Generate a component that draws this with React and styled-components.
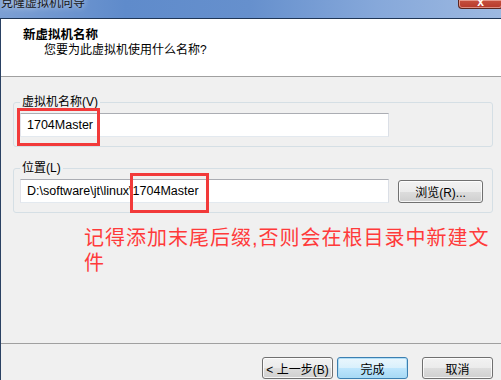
import React from 'react';
import styled, { createGlobalStyle } from 'styled-components';

const UI_FONT = '"Liberation Sans", "Noto Sans CJK SC", sans-serif';

const GlobalStyle = createGlobalStyle`
  html, body {
    margin: 0;
    padding: 0;
    background: #f0f0f0;
  }
  body {
    font-family: ${UI_FONT};
    font-size: 12px;
    color: #000;
  }
`;

const Window = styled.div`
  position: relative;
  width: 501px;
  height: 380px;
  display: flex;
  flex-direction: column;
  overflow: hidden;
  background: #f0f0f0;
`;

const TitleBar = styled.div`
  height: 18px;
  flex: none;
  display: flex;
  align-items: flex-start;
  overflow: hidden;
  background: linear-gradient(
    to right,
    #7c9fd3 0%,
    #5f8bcb 25%,
    #6690cd 50%,
    #86a8da 75%,
    #9db9e1 100%
  );
  border-bottom: 1px solid #1f3656;
`;

const TitleText = styled.span`
  margin: -5px 0 0 1px;
  font-size: 12px;
  line-height: 16px;
  color: #151515;
  text-shadow: 0 0 6px rgba(255, 255, 255, 0.8);
`;

const CloseButton = styled.div`
  margin-left: auto;
  margin-right: -2px;
  width: 43px;
  height: 8px;
  border: 1px solid #5a2620;
  border-top: none;
  border-radius: 0 0 4px 4px;
  box-shadow: inset 0 0 0 1px rgba(255, 210, 200, 0.55);
  background: linear-gradient(to bottom, #c7513f, #b5392a);
  color: #fff;
  font-size: 12px;
  line-height: 4px;
  text-align: center;
  font-weight: bold;
`;

const Frame = styled.div`
  flex: 1;
  display: flex;
  flex-direction: column;
  border-left: 1px solid #2a4163;
`;

const Header = styled.div`
  flex: none;
  height: 58px;
  box-sizing: border-box;
  padding: 9px 0 0 22px;
  background: #fff;
  border-bottom: 1px solid #a0a0a0;
`;

const HeaderTitle = styled.div`
  font-weight: bold;
  font-size: 12.5px;
  line-height: 15px;
`;

const HeaderSub = styled.div`
  padding-left: 21px;
  line-height: 15px;
`;

const Body = styled.div`
  flex: 1;
  display: flex;
  flex-direction: column;
  gap: 14px;
  padding: 18px 8px 0 12px;
`;

const Group = styled.fieldset`
  margin: 0;
  padding: 4px 8px 9px 6px;
  border: 1px solid #d5dfe5;
  border-radius: 3px;
  display: flex;
  align-items: center;
  gap: 9px;
`;

const Legend = styled.legend`
  padding: 0 2px;
  line-height: 14px;
  font-size: 12px;
`;

const TextBox = styled.div`
  width: 369px;
  height: 24px;
  box-sizing: border-box;
  padding: 0 6px;
  display: flex;
  align-items: center;
  background: #fff;
  border: 1px solid;
  border-color: #abadb3 #dbdfe6 #e3e9ef #e2e3ea;
  font-family: "Liberation Sans", sans-serif;
  font-size: 12.5px;
  white-space: nowrap;
`;

const Button = styled.div`
  width: ${({ w }) => w || 71}px;
  height: ${({ h }) => h || 22}px;
  box-sizing: border-box;
  display: flex;
  align-items: center;
  justify-content: center;
  border: 1px solid ${({ primary }) => (primary ? '#3c7fb1' : '#707070')};
  border-radius: 3px;
  box-shadow: inset 0 0 0 1px
    ${({ primary }) => (primary ? 'rgba(170, 220, 245, 0.9)' : 'rgba(255, 255, 255, 0.8)')};
  background: ${({ primary }) =>
    primary
      ? 'linear-gradient(to bottom, #eaf6fd 0%, #d9f0fc 50%, #bee6fd 50%, #a7d9f5 100%)'
      : 'linear-gradient(to bottom, #f2f2f2 0%, #ebebeb 50%, #dddddd 50%, #cfcfcf 100%)'};
  font-size: 12px;
  white-space: nowrap;
`;

const Note = styled.div`
  width: 415px;
  margin: -1px 0 0 71px;
  color: #ff3a3a;
  font-size: 20px;
  line-height: 25px;
  letter-spacing: 1px;
`;

const Footer = styled.div`
  flex: none;
  height: 37px;
  box-sizing: border-box;
  border-top: 1px solid #a0a0a0;
  display: flex;
  align-items: flex-start;
  justify-content: flex-end;
  padding: 13px 8px 0 0;
`;

const ButtonGap = styled.div`
  width: ${({ w }) => w}px;
`;

const Marker = styled.div`
  position: absolute;
  box-sizing: border-box;
  border: 3px solid #f23a3a;
  left: ${({ x }) => x}px;
  top: ${({ y }) => y}px;
  width: ${({ w }) => w}px;
  height: ${({ h }) => h}px;
`;

export default function App() {
  return (
    <>
      <GlobalStyle />
      <Window>
        <TitleBar>
          <TitleText>克隆虚拟机向导</TitleText>
          <CloseButton>x</CloseButton>
        </TitleBar>
        <Frame>
          <Header>
            <HeaderTitle>新虚拟机名称</HeaderTitle>
            <HeaderSub>您要为此虚拟机使用什么名称?</HeaderSub>
          </Header>
          <Body>
            <Group>
              <Legend>虚拟机名称(V)</Legend>
              <TextBox>1704Master</TextBox>
            </Group>
            <Group>
              <Legend>位置(L)</Legend>
              <TextBox>D:\software\jt\linux\1704Master</TextBox>
              <Button w={85} h={23}>浏览(R)...</Button>
            </Group>
            <Note>记得添加末尾后缀,否则会在根目录中新建文件</Note>
          </Body>
          <Footer>
            <Button>&lt; 上一步(B)</Button>
            <ButtonGap w={4} />
            <Button primary>完成</Button>
            <ButtonGap w={14} />
            <Button>取消</Button>
          </Footer>
        </Frame>
        <Marker x={17} y={108} w={83} h={38} />
        <Marker x={130} y={173} w={79} h={40} />
      </Window>
    </>
  );
}
